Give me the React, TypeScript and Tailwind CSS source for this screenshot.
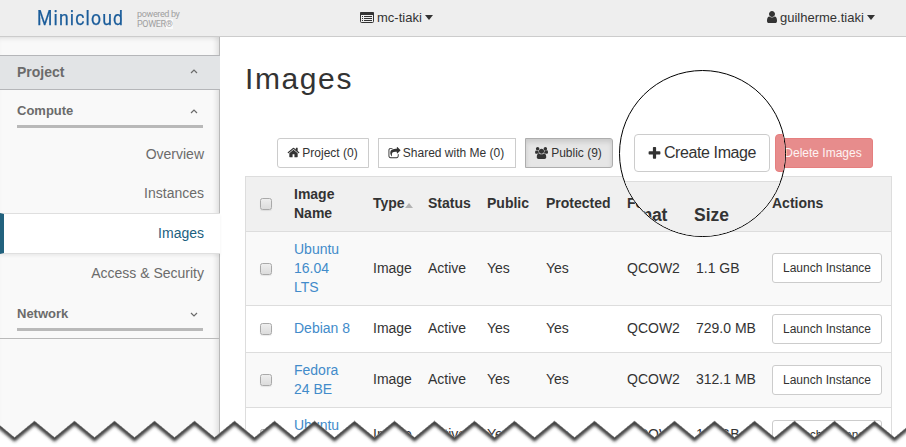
import React from "react";

const PATHS = {
  home: "M1472 992v480q0 26-19 45t-45 19h-384v-384h-256v384h-384q-26 0-45-19t-19-45v-480q0-1 .5-3t.5-3l575-474 575 474q1 2 1 6zm223-69l-62 74q-8 9-21 11h-3q-13 0-21-7l-692-577-692 577q-12 8-24 7-13-2-21-11l-62-74q-8-10-7-23.5t11-21.5l719-599q32-26 76-26t76 26l244 204v-195q0-14 9-23t23-9h192q14 0 23 9t9 23v408l219 182q10 8 11 21.5t-7 23.5z",
  share:
    "M1472 989v259q0 119-84.5 203.5t-203.5 84.5h-832q-119 0-203.5-84.5t-84.5-203.5v-832q0-119 84.5-203.5t203.5-84.5h255q13 0 22.5 9.5t9.5 22.5q0 27-26 32-77 26-133 60-10 4-16 4h-112q-66 0-113 47t-47 113v832q0 66 47 113t113 47h832q66 0 113-47t47-113v-214q0-19 18-29 28-13 54-37 16-16 35-8 21 9 21 29zm237-496l-384 384q-18 19-45 19-12 0-25-5-39-17-39-59v-192h-160q-323 0-438 131-119 137-74 473 3 23-20 34-8 2-12 2-16 0-26-13-10-14-21-31t-39.5-68.5-49.5-99.5-38.5-114-17.5-122q0-49 3.5-91t14-90 28-88 47-81.5 68.5-74 94.5-61.5 124.5-48.5 159.5-30.5 196.5-11h160v-192q0-42 39-59 13-5 25-5 26 0 45 19l384 384q19 19 19 45t-19 45z",
  group:
    "M593 896q-162 5-265 128h-134q-82 0-138-40.5t-56-118.5q0-353 124-353 6 0 43.5 21t97.5 42.5 119 21.5q67 0 133-23-5 37-5 66 0 159 93 294zm1071 637q0 120-73 189.5t-194 69.5h-874q-121 0-194-69.5t-73-189.5q0-53 3.5-103.5t14-109 26.5-108.5 43-97.5 62-81 85.5-53.5 111.5-20q10 0 43 21.5t73 48 107 48 135 21.5 135-21.5 107-48 73-48 43-21.5q61 0 111.5 20t85.5 53.5 62 81 43 97.5 26.5 108.5 14 109 3.5 103.5zm-1024-1277q0 106-75 181t-181 75-181-75-75-181 75-181 181-75 181 75 75 181zm704 384q0 159-112.5 271.5t-271.5 112.5-271.5-112.5-112.5-271.5 112.5-271.5 271.5-112.5 271.5 112.5 112.5 271.5zm576 225q0 78-56 118.5t-138 40.5h-134q-103-123-265-128 93-135 93-294 0-29-5-66 66 23 133 23 59 0 119-21.5t97.5-42.5 43.5-21q124 0 124 353zm-128-609q0 106-75 181t-181 75-181-75-75-181 75-181 181-75 181 75 75 181z",
  user: "M1536 1399q0 109-62.5 187t-150.5 78h-854q-88 0-150.5-78t-62.5-187q0-85 8.5-160.5t31.5-152 58.5-131 94-89 134.5-34.5q131 128 313 128t313-128q76 0 134.5 34.5t94 89 58.5 131 31.5 152 8.5 160.5zm-256-887q0 159-112.5 271.5t-271.5 112.5-271.5-112.5-112.5-271.5 112.5-271.5 271.5-112.5 271.5 112.5 112.5 271.5z",
  plus: "M1600 736v192q0 40-28 68t-68 28h-416v416q0 40-28 68t-68 28h-192q-40 0-68-28t-28-68v-416h-416q-40 0-68-28t-28-68v-192q0-40 28-68t68-28h416v-416q0-40 28-68t68-28h192q40 0 68 28t28 68v416h416q40 0 68 28t28 68z",
};

function Glyph({ d, box = "0 0 1792 1792", className }: { d: string; box?: string; className: string }) {
  return (
    <svg viewBox={box} fill="currentColor" className={className}>
      <path d={d} />
    </svg>
  );
}

function Caret() {
  return <span className="-mt-px ml-[3px] h-0 w-0 border-x-[4.5px] border-t-[5px] border-x-transparent border-t-[#333]" />;
}

function Chevron({ open = false }: { open?: boolean }) {
  return (
    <svg width="8" height="5" viewBox="0 0 8 5" fill="none" stroke="#6b6b6b" strokeWidth="1.2" className="mr-[5px]">
      <path d={open ? "M1 4 4 1 7 4" : "M1 1 4 4 7 1"} />
    </svg>
  );
}

function Checkbox() {
  return (
    <span className="block h-3 w-3 rounded-[2.5px] border border-[#a9a9a9] bg-linear-to-b from-[#eeeeee] to-[#dcdcdc] shadow-[0_1px_1px_rgba(0,0,0,0.08)]" />
  );
}

function NavItem({ label, active = false }: { label: string; active?: boolean }) {
  return active ? (
    <div className="relative -mr-px flex h-[41px] items-center justify-end border-y border-l-4 border-y-[#dfdfdf] border-l-[#22627e] bg-white pr-4 pb-[2px] text-[#1c5f80] shadow-[0_2px_3px_rgba(0,0,0,0.06)]">
      {label}
    </div>
  ) : (
    <div className="flex h-[39px] items-center justify-end pr-[15px] pb-[2px]">{label}</div>
  );
}

function Sidebar() {
  return (
    <aside className="h-[410px] w-[220px] shrink-0 border-r border-[#b9b9b9] bg-[#f9f9f9] pt-[18px] text-sm text-[#6b6b6b] shadow-[inset_-5px_0_5px_-2px_rgba(0,0,0,0.09),inset_0_4px_4px_-2px_rgba(0,0,0,0.08)]">
      <div className="-mr-px flex h-[35px] items-center justify-between border-y border-[#b5b6b9] bg-[#e2e4e6] pr-[17px] pb-[2px] pl-[17px] font-bold">
        Project
        <Chevron open />
      </div>
      <div className="h-[249px] border-b border-[#b9b9b9]">
        <div className="mr-4 ml-[17px] flex h-[38px] items-center justify-between border-b-[3px] border-[#b9b9b9] pt-2 text-[13px] font-bold">
          Compute
          <Chevron open />
        </div>
        <div className="pt-[7px]">
          <NavItem label="Overview" />
          <NavItem label="Instances" />
          <NavItem label="Images" active />
          <NavItem label="Access & Security" />
        </div>
        <div className="mr-4 ml-[17px] flex h-[38px] items-center justify-between border-b-[3px] border-[#b9b9b9] pt-[7px] text-[13px] font-bold">
          Network
          <Chevron />
        </div>
      </div>
    </aside>
  );
}

const ROWS = [
  { name: ["Ubuntu", "16.04", "LTS"], size: "1.1 GB", cls: "h-[74px] bg-[#f9f9f9]" },
  { name: ["Debian 8"], size: "729.0 MB", cls: "h-[47px] bg-white" },
  { name: ["Fedora", "24 BE"], size: "312.1 MB", cls: "h-[55px] bg-[#f9f9f9]" },
  { name: ["Ubuntu", "14.04"], size: "1.1 GB", cls: "h-[55px] bg-white" },
];

const COLS = "grid grid-cols-[40px_79px_55px_59px_59px_81px_69px_76px_1fr] items-center border-t border-[#ddd]";
const CELL = "pl-2 pb-px";

function ImageTable() {
  return (
    <div className="w-[647px] border-x border-[#ddd] text-sm leading-[19px]">
      <div className={COLS + " h-[55px] bg-[#f0f0f0] font-bold"}>
        <span className="pl-3.5">
          <Checkbox />
        </span>
        <span className={CELL}>
          Image
          <br />
          Name
        </span>
        <span className={CELL + " flex items-center"}>
          Type
          <span className="mt-[3px] border-x-[4.5px] border-b-[5px] border-x-transparent border-b-[#b3b3b3]" />
        </span>
        <span className={CELL}>Status</span>
        <span className={CELL}>Public</span>
        <span className={CELL}>Protected</span>
        <span className={CELL}>Format</span>
        <span className={CELL}>Size</span>
        <span className={CELL}>Actions</span>
      </div>
      {ROWS.map((row, i) => (
        <div key={i} className={COLS + " " + row.cls}>
          <span className="pl-3.5">
            <Checkbox />
          </span>
          <span className={CELL + " text-[#428bca]"}>
            {row.name.map((part) => (
              <span key={part} className="block">
                {part}
              </span>
            ))}
          </span>
          <span className={CELL}>Image</span>
          <span className={CELL}>Active</span>
          <span className={CELL}>Yes</span>
          <span className={CELL}>Yes</span>
          <span className={CELL}>QCOW2</span>
          <span className={CELL}>{row.size}</span>
          <span className={CELL}>
            <button className="block h-[30px] w-[110px] rounded-[3px] border border-[#ccc] bg-white text-xs">
              Launch Instance
            </button>
          </span>
        </div>
      ))}
    </div>
  );
}

function Lens() {
  return (
    <div className="absolute top-[70px] left-[619px] h-[167px] w-[167px] overflow-hidden rounded-full border-[1.5px] border-black bg-white">
      <div className="flex h-[110px] w-[260px] items-start pt-[63px] pl-[14px]">
        <button className="flex h-[38px] w-[136px] shrink-0 items-center justify-center rounded-[4px] border border-[#ccc] pr-px text-[16px] tracking-[-0.4px]">
          <Glyph d={PATHS.plus} className="mr-[2px] h-[15px] w-[15px]" />
          Create Image
        </button>
        <span className="ml-[5px] h-[38px] w-[110px] shrink-0 rounded-[4px] border border-[#e57f7f] bg-[#e78c8c]" />
      </div>
      <div className="flex h-14 w-[260px] border-t border-[#ddd] bg-[#f0f0f0] pt-[23px] text-[17.5px] leading-5 font-bold">
        <span className="flex w-[47px] justify-end tracking-[-0.3px]">Format</span>
        <span className="ml-[27px]">Size</span>
      </div>
    </div>
  );
}

const TEETH = Array.from({ length: 24 }, (_, i) => {
  const x = 14.5 + (i - 1) * 40;
  return `${x},437.5 ${x + 20},421`;
}).join(" ");

function TornEdge() {
  return (
    <svg width="906" height="447" className="pointer-events-none absolute inset-0">
      <defs>
        <clipPath id="below">
          <polygon points={`${TEETH} 960,460 -40,460`} />
        </clipPath>
        <filter id="soft" x="-5%" y="-50%" width="110%" height="200%">
          <feGaussianBlur stdDeviation="1.7" />
        </filter>
      </defs>
      <g clipPath="url(#below)">
        <rect y="415" width="906" height="32" fill="white" />
        <polyline
          points={TEETH}
          fill="none"
          stroke="#2a2a2a"
          strokeOpacity="0.9"
          strokeWidth="5"
          transform="translate(0 1)"
          filter="url(#soft)"
        />
      </g>
      <polyline points={TEETH} fill="none" stroke="#777" strokeWidth="0.8" strokeDasharray="1 1" />
    </svg>
  );
}

export default function App() {
  return (
    <div className="relative h-[447px] w-[906px] overflow-hidden bg-white font-['Liberation_Sans',Arial,sans-serif] text-[#333]">
      <header className="flex h-[37px] items-center border-b border-[#ccc] bg-[#eee] text-[13px]">
        <div className="w-[99px] pl-[37px] leading-none whitespace-nowrap text-[#1a5c9a]">
          <span className="inline-block origin-left scale-x-[0.88] font-[Roboto,sans-serif] text-[20px] tracking-[1.3px] [-webkit-text-stroke:0.25px_#1a5c9a]">
            Minicloud
          </span>
        </div>
        <div className="mt-[2px] ml-[38px] w-[223px] font-[Roboto,sans-serif] text-[9px] leading-[10px] tracking-[-0.35px] text-[#a0a0a0]">
          powered by
          <br />
          POWER<span className="bg-[#f9f9f9]">®</span>
        </div>
        <div className="flex w-[406px] items-center">
          <svg width="14" height="11" viewBox="0 0 14 11" className="-mt-[2px] mr-[3px]" fill="#333">
            <rect x="0.5" y="0.5" width="13" height="10" rx="1" fill="none" stroke="#333" />
            <rect width="14" height="3" rx="1" />
            <path d="M2 4h1v1H2zM4 4h8v1H4zM2 6h1v1H2zM4 6h8v1H4zM2 8h1v1H2zM4 8h8v1H4z" />
          </svg>
          mc-tiaki
          <Caret />
        </div>
        <div className="flex items-center">
          <Glyph d={PATHS.user} className="mr-[1px] -mt-[2px] -ml-[1px] h-[14px] w-[14px]" />
          guilherme.tiaki
          <Caret />
        </div>
      </header>
      <div className="flex">
        <Sidebar />
        <main className="h-[410px] w-[686px] overflow-hidden pl-[25px]">
          <h1 className="pt-[25px] text-[30px] leading-[34px] tracking-[1.6px]">Images</h1>
          <div className="mt-[42px] flex h-[38px] pl-8 text-xs">
            <button className="flex h-[30px] w-[92px] items-center justify-center rounded-l-[3px] border border-[#ccc] pr-px">
              <Glyph d={PATHS.home} className="-mt-px mr-[2px] h-[13px] w-[13px]" />
              Project (0)
            </button>
            <button className="ml-[9px] flex h-[30px] w-[138px] items-center justify-center border border-[#ccc] pr-[2px]">
              <Glyph d={PATHS.share} className="mr-[2px] h-[13px] w-[13px]" />
              Shared with Me (0)
            </button>
            <button className="ml-[9px] flex h-[30px] w-[88px] items-center justify-center rounded-r-[3px] border border-[#adadad] bg-[#e6e6e6] pr-px shadow-[inset_0_3px_5px_rgba(0,0,0,0.125)]">
              <Glyph d={PATHS.group} box="0 0 1920 1792" className="mr-[3px] h-3 w-[13px]" />
              Public (9)
            </button>
            <button className="ml-[160px] h-[30px] w-[100px] rounded-[3px] border border-[#e57f7f] bg-[#e78c8c] text-white/90">
              Delete Images
            </button>
          </div>
          <ImageTable />
        </main>
      </div>
      <Lens />
      <TornEdge />
    </div>
  );
}
